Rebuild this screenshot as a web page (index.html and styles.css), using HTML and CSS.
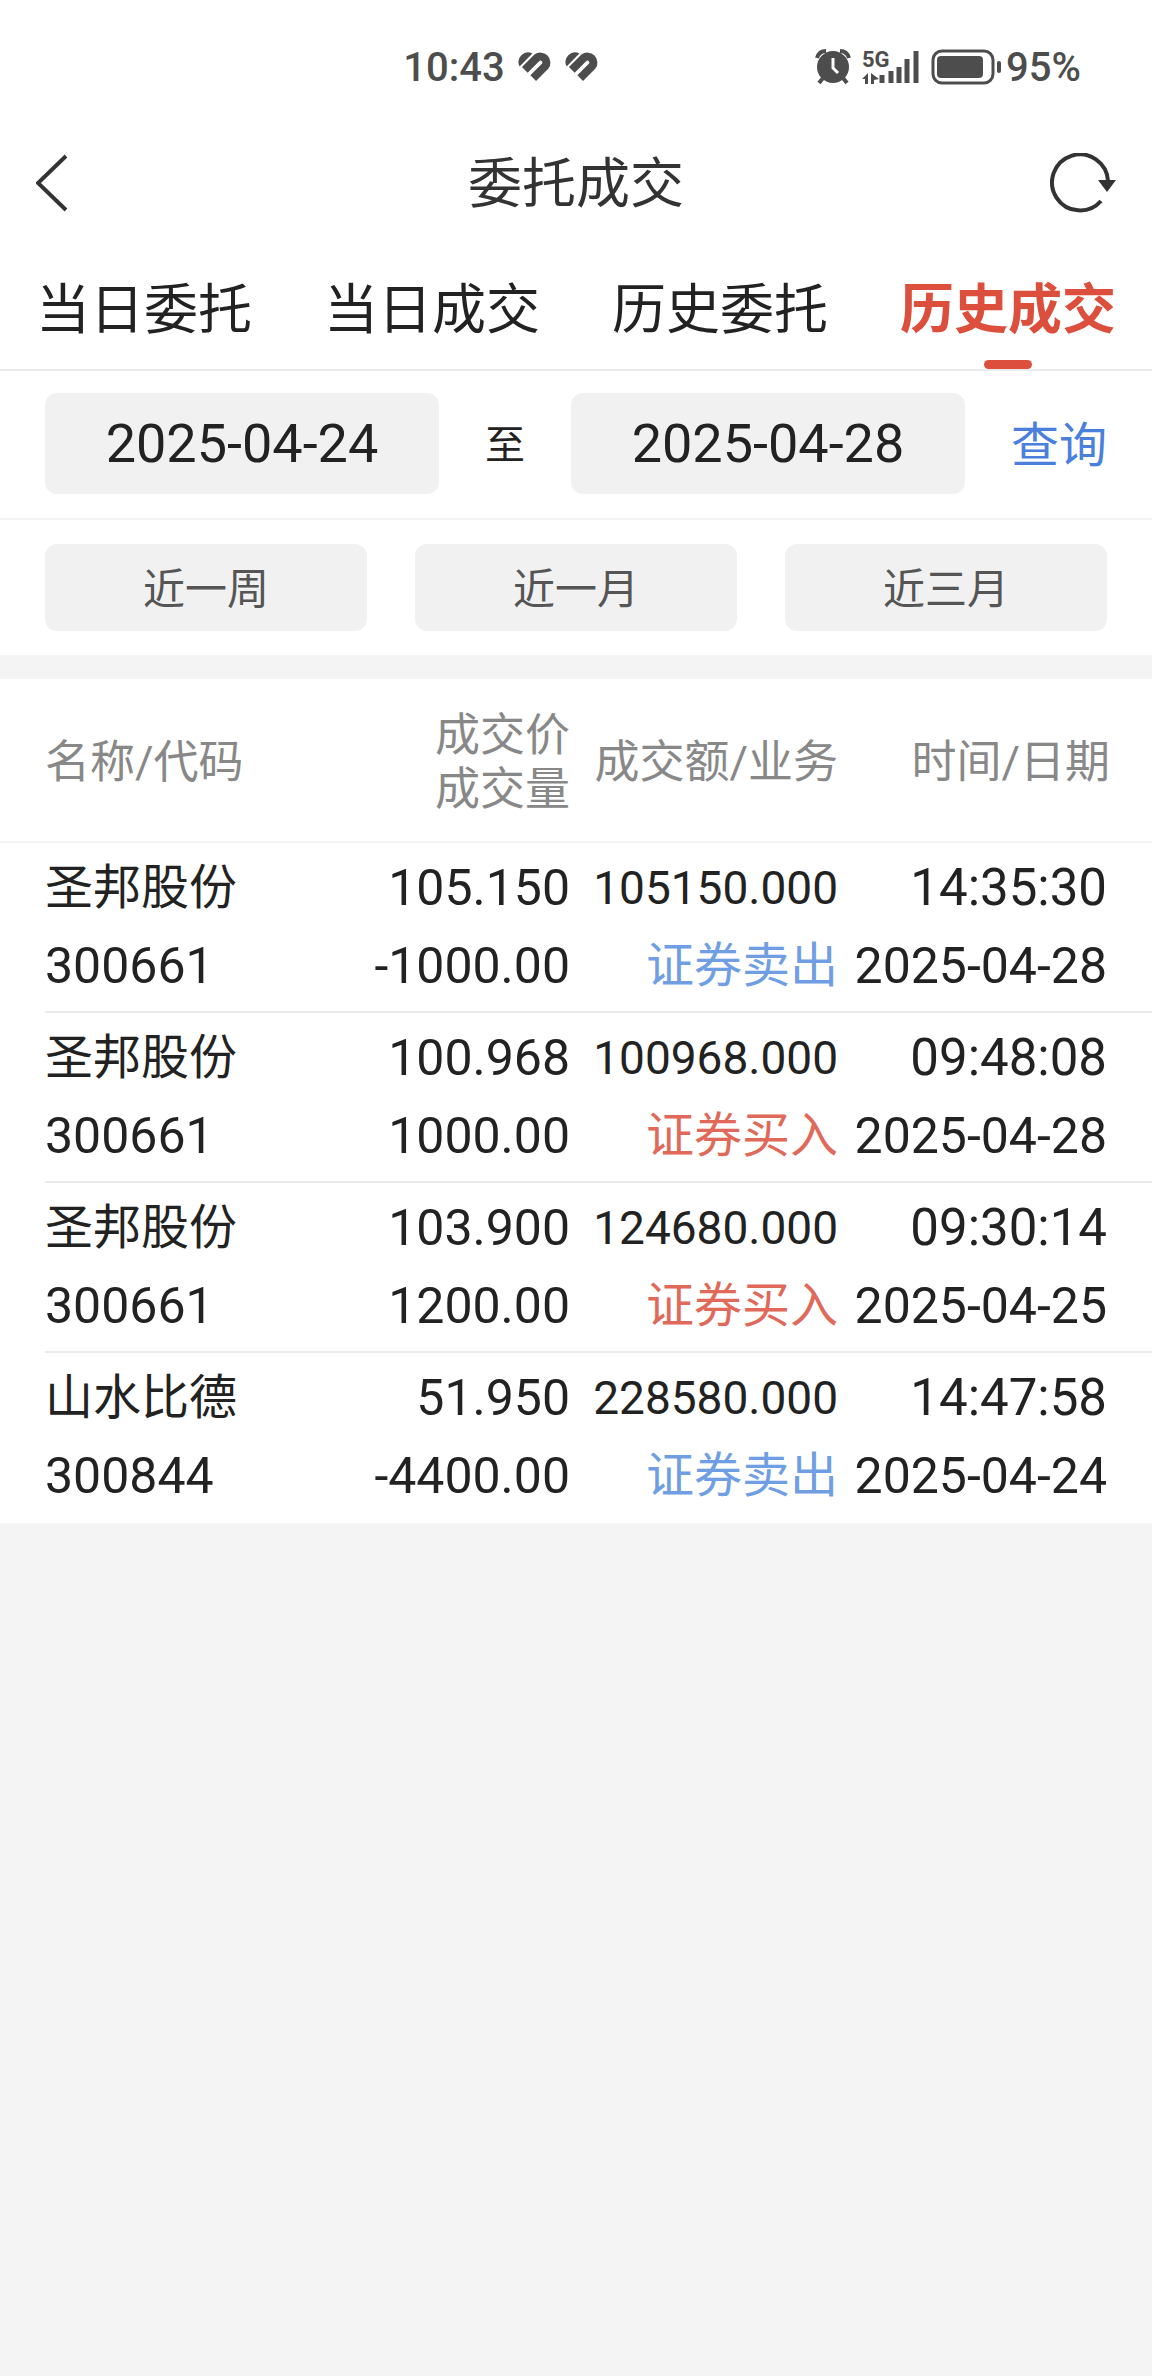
FILE: index.html
```html
<!DOCTYPE html>
<html lang="zh-CN">
<head>
    <meta charset="UTF-8">
    <meta name="viewport" content="width=device-width, initial-scale=1.0">
    <title>委托成交</title>
    <link rel="stylesheet" href="styles.css">
</head>
<body>
    <div class="top">
        <div class="status-bar">
            <div class="status-left">
                <span>10:43</span>
                <svg width="34" height="30" viewBox="0 0 34 30">
                    <path d="M1.6 14.4A9.5 9.5 0 0 1 14.4 1.6Z" fill="#4d4d4d"/>
                    <path d="M6.8 17.8L18.8 5.8A6 6 0 0 1 27.2 14.2L15.2 26.2" fill="none" stroke="#4d4d4d" stroke-width="8"/>
                </svg>
                <svg width="34" height="30" viewBox="0 0 34 30">
                    <path d="M1.6 14.4A9.5 9.5 0 0 1 14.4 1.6Z" fill="#4d4d4d"/>
                    <path d="M6.8 17.8L18.8 5.8A6 6 0 0 1 27.2 14.2L15.2 26.2" fill="none" stroke="#4d4d4d" stroke-width="8"/>
                </svg>
            </div>
            <div class="status-right">
                <svg width="36" height="36" viewBox="0 0 36 36">
                    <circle cx="18" cy="18" r="16" fill="#4d4d4d"/>
                    <path d="M18 9V19L23 24" fill="none" stroke="#fff" stroke-width="3"/>
                    <path d="M2 9Q4 2 11 2M34 9Q32 2 25 2" fill="none" stroke="#4d4d4d" stroke-width="4"/>
                    <path d="M8 29L4 34M28 29L32 34" stroke="#4d4d4d" stroke-width="4"/>
                </svg>
                <svg width="58" height="44" viewBox="0 -4 58 44">
                    <text x="0" y="18" class="net">5G</text>
                    <path d="M0 30L6 24V35H3V30ZM9 24L17 30L12 31V35H9Z" fill="#4d4d4d"/>
                    <path d="M20 26V34M29 22V34M37 18V34M45 10V34M54 2V34" stroke="#4d4d4d" stroke-width="5" stroke-linecap="butt"/>
                </svg>
                <svg class="battery" width="70" height="36" viewBox="0 0 70 36">
                    <rect x="2" y="2" width="60" height="32" rx="9" fill="none" stroke="#4d4d4d" stroke-width="3"/>
                    <rect x="6" y="7" width="46" height="22" rx="4" fill="#4d4d4d"/>
                    <rect x="66" y="12" width="4" height="12" rx="2" fill="#4d4d4d"/>
                </svg>
                <span>95%</span>
            </div>
        </div>

        <header class="nav">
            <button type="button" class="icon-btn" aria-label="返回">
                <svg width="34" height="58" viewBox="0 0 34 58">
                    <path d="M30 2L2 29L30 56" fill="none" stroke="#333" stroke-width="4"/>
                </svg>
            </button>
            <h1>委托成交</h1>
            <button type="button" class="icon-btn" aria-label="刷新">
                <svg width="66" height="60" viewBox="0 0 66 60">
                    <path d="M58 28A28 28 0 1 0 51 48" fill="none" stroke="#333" stroke-width="4"/>
                    <path d="M48 27H66L57 39Z" fill="#333"/>
                </svg>
            </button>
        </header>

        <nav class="tabs">
            <button type="button" class="tab">当日委托</button>
            <button type="button" class="tab">当日成交</button>
            <button type="button" class="tab">历史委托</button>
            <button type="button" class="tab active">历史成交</button>
        </nav>

        <form class="date-row">
            <input type="text" class="date" id="start" aria-label="开始日期" value="2025-04-24">
            <label for="end">至</label>
            <input type="text" class="date" id="end" value="2025-04-28">
            <button type="button" class="query">查询</button>
        </form>

        <div class="range-row">
            <button type="button" class="range">近一周</button>
            <button type="button" class="range">近一月</button>
            <button type="button" class="range">近三月</button>
        </div>
    </div>

    <table class="deals">
        <colgroup>
            <col>
            <col class="col-price">
            <col class="col-amount">
            <col class="col-time">
        </colgroup>
        <thead>
            <tr>
                <th>名称/代码</th>
                <th>成交价<br>成交量</th>
                <th>成交额/业务</th>
                <th>时间/日期</th>
            </tr>
        </thead>
        <tbody>
            <tr>
                <td><span class="name">圣邦股份</span><span>300661</span></td>
                <td><span>105.150</span><span>-1000.00</span></td>
                <td><span class="amount">105150.000</span><span class="sell">证券卖出</span></td>
                <td><span class="time">14:35:30</span><span>2025-04-28</span></td>
            </tr>
            <tr>
                <td><span class="name">圣邦股份</span><span>300661</span></td>
                <td><span>100.968</span><span>1000.00</span></td>
                <td><span class="amount">100968.000</span><span class="buy">证券买入</span></td>
                <td><span class="time">09:48:08</span><span>2025-04-28</span></td>
            </tr>
            <tr>
                <td><span class="name">圣邦股份</span><span>300661</span></td>
                <td><span>103.900</span><span>1200.00</span></td>
                <td><span class="amount">124680.000</span><span class="buy">证券买入</span></td>
                <td><span class="time">09:30:14</span><span>2025-04-25</span></td>
            </tr>
            <tr>
                <td><span class="name">山水比德</span><span>300844</span></td>
                <td><span>51.950</span><span>-4400.00</span></td>
                <td><span class="amount">228580.000</span><span class="sell">证券卖出</span></td>
                <td><span class="time">14:47:58</span><span>2025-04-24</span></td>
            </tr>
        </tbody>
    </table>
</body>
</html>
```
FILE: styles.css
```css
* {
    margin: 0;
    padding: 0;
    box-sizing: border-box;
}

body {
    font-family: Roboto, "Noto Sans CJK SC", sans-serif;
    background-color: #f4f4f4;
    color: #222;
}

button, input {
    font-family: inherit;
    color: inherit;
    border: none;
    background: none;
}

button {
    cursor: pointer;
}

svg {
    display: block;
}

.top {
    background-color: #fff;
    margin-bottom: 24px;
}

/* status bar */
.status-bar {
    display: flex;
    justify-content: space-between;
    align-items: center;
    height: 134px;
    padding: 0 71px 0 35%;
    font-size: 40px;
    font-weight: 500;
    color: #4d4d4d;
}

.status-left, .status-right {
    display: flex;
    align-items: center;
    gap: 13px;
}

.status-right {
    gap: 11px;
}

.battery {
    margin-right: -6px;
}

.net {
    font-size: 22px;
    font-weight: 700;
    fill: #4d4d4d;
}

/* title */
.nav {
    display: flex;
    justify-content: space-between;
    align-items: center;
    height: 98px;
    margin-bottom: 17px;
    padding: 0 36px;
}

.nav h1 {
    padding-top: 4px;
    font-size: 54px;
    font-weight: 400;
    line-height: 60px;
    color: #333;
}

.icon-btn {
    display: flex;
    width: 66px;
}

/* tabs */
.tabs {
    display: grid;
    grid-template-columns: repeat(4, 1fr);
    border-bottom: 2px solid #ebebeb;
}

.tab {
    position: relative;
    height: 120px;
    padding-top: 4px;
    font-size: 54px;
    line-height: 60px;
}

.tab.active {
    font-weight: 700;
    color: #dc4f3d;
}

.tab.active::after {
    content: "";
    position: absolute;
    left: 50%;
    bottom: 0;
    width: 48px;
    height: 9px;
    margin-left: -24px;
    border-radius: 5px;
    background-color: #dc4f3d;
}

/* filters */
.date-row {
    display: flex;
    align-items: center;
    gap: 46px;
    padding: 22px 45px 24px;
    border-bottom: 2px solid #f4f4f4;
    font-size: 40px;
    line-height: 50px;
}

.date {
    flex: 1;
    min-width: 0;
    height: 101px;
    border-radius: 12px;
    background-color: #f1f1f1;
    font-size: 54px;
    text-align: center;
}

.date-row label {
    padding-top: 4px;
}

.query {
    padding-top: 4px;
    font-size: 48px;
    line-height: 50px;
    color: #4a80dc;
}

.range-row {
    display: grid;
    grid-template-columns: repeat(3, 1fr);
    gap: 48px;
    padding: 24px 45px;
}

.range {
    height: 87px;
    padding-top: 4px;
    border-radius: 12px;
    background-color: #f1f1f1;
    font-size: 42px;
    line-height: 50px;
    color: #555;
}

/* deals */
.deals {
    width: 100%;
    table-layout: fixed;
    border-spacing: 0;
    background-color: #fff;
    white-space: nowrap;
}

.col-price {
    width: 255px;
}

.col-amount {
    width: 268px;
}

.col-time {
    width: 314px;
}

.deals th {
    height: 164px;
    padding-top: 5px;
    border-bottom: 2px solid #f4f4f4;
    font-size: 45px;
    font-weight: 400;
    line-height: 54px;
    color: #888;
    text-align: right;
}

.deals td {
    padding: 6px 0 8px;
    font-size: 50px;
    line-height: 78px;
    text-align: right;
}

.deals td span {
    display: block;
}

.deals th:first-child, .deals td:first-child {
    padding-left: 45px;
    text-align: left;
}

.deals td:last-child {
    padding-right: 45px;
}

.deals th:last-child {
    padding-right: 42px;
}

/* divider starts under the name, not at the edge */
.deals tbody tr {
    background: linear-gradient(#ebebeb, #ebebeb) 45px 100% / 100% 2px no-repeat;
}

.deals tbody tr:last-child {
    background: none;
}

.name, .sell, .buy {
    font-size: 48px;
}

.amount {
    font-size: 46px;
}

.time {
    font-size: 51px;
}

.sell {
    color: #6f9ee3;
}

.buy {
    color: #e0695a;
}
```
